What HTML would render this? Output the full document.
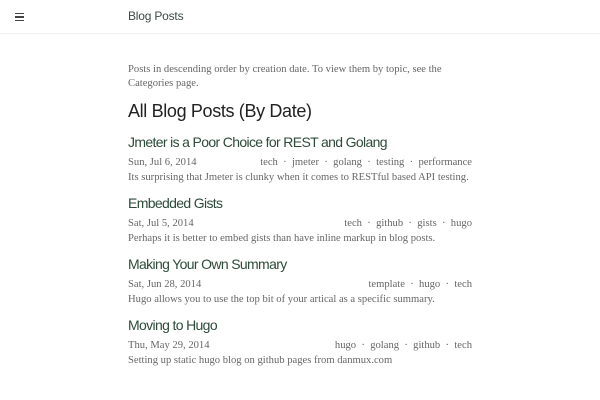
<!DOCTYPE html>
<html><head><style>
body{margin:0;width:600px;height:400px;background:#fff;overflow:hidden;font-family:"Liberation Serif",serif;}
.hdr{position:absolute;left:0;top:0;width:600px;height:33px;border-bottom:1px solid #f0f0f0;}
.menu{position:absolute;left:15px;top:13px;width:9px;}
.menu i{display:block;height:1.3px;background:#444;margin-bottom:2px;}
.ht{position:absolute;left:128px;top:9px;font:12px "Liberation Sans",sans-serif;color:#3d4a44;letter-spacing:-0.2px}
.c{position:absolute;left:128px;top:0;width:344px;color:#666;font-size:10.6px;}
.p{position:absolute;left:0;width:344px;line-height:14px;}
h1{position:absolute;left:0;margin:0;font:normal 18px "Liberation Sans",sans-serif;color:#222;white-space:nowrap;letter-spacing:-0.35px}
h2{position:absolute;left:0;margin:0;font:normal 14px "Liberation Sans",sans-serif;color:#2d4a3a;white-space:nowrap;letter-spacing:-0.65px}
.m{position:absolute;left:0;width:344px;display:flex;justify-content:space-between;white-space:nowrap;}
</style></head><body>
<div class="hdr"><div class="menu"><i></i><i></i><i></i></div><div class="ht">Blog Posts</div></div>
<div class="c">
<div class="p" style="top:63px">Posts in descending order by creation date. To view them by topic, see the Categories page.</div>
<h1 style="top:101px">All Blog Posts (By Date)</h1>
<h2 style="top:134px">Jmeter is a Poor Choice for REST and Golang</h2>
<div class="m" style="top:157px"><span>Sun, Jul 6, 2014</span><span>tech &nbsp;·&nbsp; jmeter &nbsp;·&nbsp; golang &nbsp;·&nbsp; testing &nbsp;·&nbsp; performance</span></div>
<div class="p" style="top:171px">Its surprising that Jmeter is clunky when it comes to RESTful based API testing.</div>
<h2 style="top:195px">Embedded Gists</h2>
<div class="m" style="top:218px"><span>Sat, Jul 5, 2014</span><span>tech &nbsp;·&nbsp; github &nbsp;·&nbsp; gists &nbsp;·&nbsp; hugo</span></div>
<div class="p" style="top:232px">Perhaps it is better to embed gists than have inline markup in blog posts.</div>
<h2 style="top:256px">Making Your Own Summary</h2>
<div class="m" style="top:279px"><span>Sat, Jun 28, 2014</span><span>template &nbsp;·&nbsp; hugo &nbsp;·&nbsp; tech</span></div>
<div class="p" style="top:293px">Hugo allows you to use the top bit of your artical as a specific summary.</div>
<h2 style="top:317px">Moving to Hugo</h2>
<div class="m" style="top:340px"><span>Thu, May 29, 2014</span><span>hugo &nbsp;·&nbsp; golang &nbsp;·&nbsp; github &nbsp;·&nbsp; tech</span></div>
<div class="p" style="top:354px">Setting up static hugo blog on github pages from danmux.com</div>
</div>
</body></html>
